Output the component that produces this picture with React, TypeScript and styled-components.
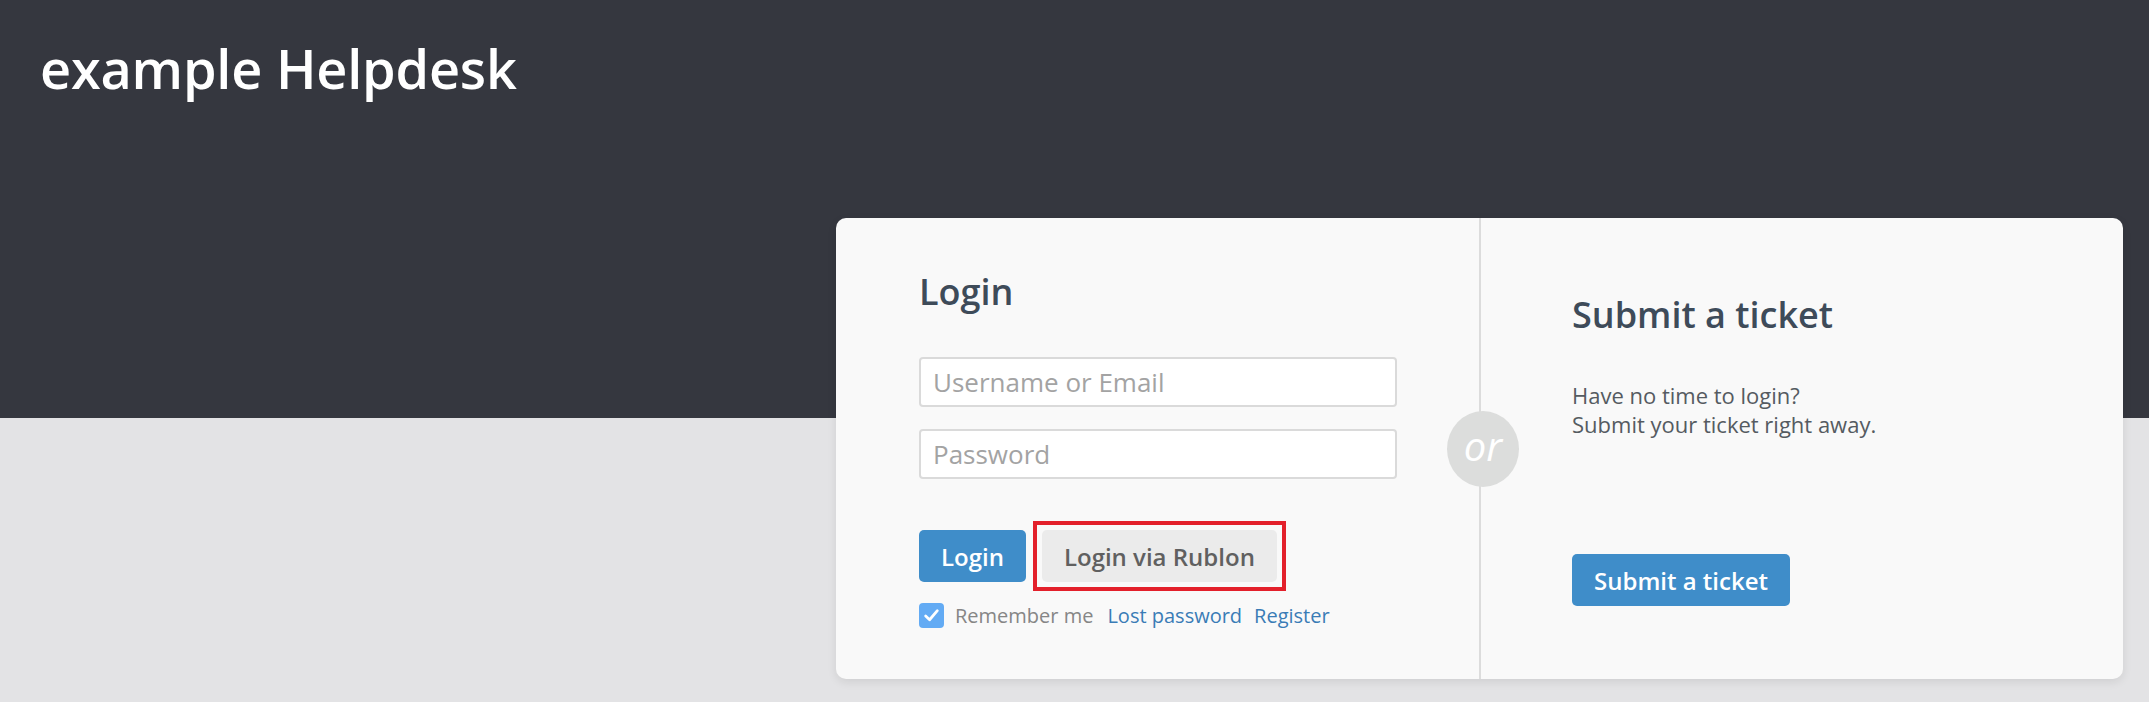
import React, { useState } from 'react';
import styled, { createGlobalStyle } from 'styled-components';

const GlobalStyle = createGlobalStyle`
  html, body {
    margin: 0;
    padding: 0;
  }
  body {
    font-family: 'Open Sans', 'Liberation Sans', Arial, sans-serif;
    background: #e3e3e5;
  }
`;

const App: React.FC = () => {
  const [remember, setRemember] = useState(true);

  return (
    <Page>
      <GlobalStyle />
      <SiteTitle>example Helpdesk</SiteTitle>

      <Card>
        <LoginPane>
          <PaneTitle>Login</PaneTitle>
          <Fields>
            <Input type="text" placeholder="Username or Email" />
            <Input type="password" placeholder="Password" />
          </Fields>
          <ButtonRow>
            <Button $variant="primary">Login</Button>
            <Highlight>
              <Button $variant="secondary">Login via Rublon</Button>
            </Highlight>
          </ButtonRow>
          <OptionsRow>
            <CheckLabel>
              <CheckBox $checked={remember} onClick={() => setRemember(!remember)}>
                {remember && (
                  <svg width="17" height="17" viewBox="0 0 16 16">
                    <path d="M2.5 8.5 L6.2 12 L13.5 3.5" fill="none" stroke="#fff" strokeWidth="2.6" strokeLinecap="round" strokeLinejoin="round" />
                  </svg>
                )}
              </CheckBox>
              Remember me
            </CheckLabel>
            <Link href="#">Lost password</Link>
            <Link href="#">Register</Link>
          </OptionsRow>
        </LoginPane>

        <OrBadge>or</OrBadge>

        <TicketPane>
          <PaneTitle>Submit a ticket</PaneTitle>
          <Blurb>
            Have no time to login?
            <br />
            Submit your ticket right away.
          </Blurb>
          <SubmitButton $variant="primary">Submit a ticket</SubmitButton>
        </TicketPane>
      </Card>
    </Page>
  );
};

const Page = styled.div`
  height: 702px;
  overflow: hidden;
  background: linear-gradient(to bottom, #35373f 0, #35373f 418px, #e3e3e5 418px);
  padding: 31px 26px 0 40px;
  box-sizing: border-box;
  display: flex;
  flex-direction: column;
`;

const SiteTitle = styled.h1`
  margin: 0;
  font-size: 54px;
  line-height: 75px;
  font-weight: 600;
  color: #ffffff;
  letter-spacing: -0.2px;
`;

const Card = styled.div`
  position: relative;
  align-self: flex-end;
  margin-top: 112px;
  width: 1287px;
  height: 461px;
  flex-shrink: 0;
  display: grid;
  grid-template-columns: 645px 1fr;
  background: #f9f9f9;
  border-radius: 10px;
  box-shadow: 0 3px 10px rgba(0, 0, 0, 0.09);
`;

const LoginPane = styled.div`
  padding: 52px 0 0 83px;
  border-right: 2px solid #dcdcdc;
  display: flex;
  flex-direction: column;
`;

const TicketPane = styled.div`
  padding: 75px 0 0 91px;
  display: flex;
  flex-direction: column;
  align-items: flex-start;
`;

const PaneTitle = styled.h2`
  margin: 0;
  font-size: 36px;
  line-height: 43px;
  font-weight: 600;
  color: #3e4b59;
`;

const Fields = styled.div`
  margin-top: 44px;
  display: flex;
  flex-direction: column;
  gap: 22px;
  width: 478px;
`;

const Input = styled.input`
  box-sizing: border-box;
  height: 50px;
  width: 100%;
  padding: 0 12px;
  border: 2px solid #dadada;
  border-radius: 4px;
  background: #ffffff;
  font-family: 'Open Sans', 'Liberation Sans', Arial, sans-serif;
  font-size: 26px;
  color: #444;
  outline: none;

  &::placeholder {
    color: #a3a3a3;
  }
`;

const ButtonRow = styled.div`
  margin-top: 51px;
  display: flex;
  align-items: center;
  gap: 16px;
`;

const Button = styled.button<{ $variant: 'primary' | 'secondary' }>`
  height: 52px;
  padding: 0 22px;
  border: none;
  border-radius: 5px;
  font-family: 'Open Sans', 'Liberation Sans', Arial, sans-serif;
  font-size: 24px;
  font-weight: 600;
  cursor: pointer;
  background: ${p => (p.$variant === 'primary' ? '#3f8dc9' : '#ebebeb')};
  color: ${p => (p.$variant === 'primary' ? '#ffffff' : '#606060')};
`;

const SubmitButton = styled(Button)`
  margin-top: 115px;
`;

const Highlight = styled.div`
  display: flex;
  outline: 4px solid #e3202b;
  outline-offset: 5px;
`;

const OptionsRow = styled.div`
  margin-top: 20px;
  display: flex;
  align-items: center;
  gap: 12px;
  font-size: 20px;
`;

const CheckLabel = styled.label`
  display: flex;
  align-items: center;
  gap: 11px;
  color: #868686;
  margin-right: 2px;
`;

const CheckBox = styled.span<{ $checked: boolean }>`
  width: 25px;
  height: 25px;
  border-radius: 4px;
  display: flex;
  align-items: center;
  justify-content: center;
  background: ${p => (p.$checked ? '#63abf4' : '#ffffff')};
  cursor: pointer;
`;

const Link = styled.a`
  color: #3a7cb6;
  text-decoration: none;
`;

const OrBadge = styled.div`
  position: absolute;
  left: 611px;
  top: 193px;
  width: 72px;
  height: 76px;
  border-radius: 50%;
  background: #dcdddc;
  display: flex;
  align-items: center;
  justify-content: center;
  color: #ffffff;
  font-size: 40px;
  font-style: italic;
  line-height: 1;
  padding-bottom: 6px;
  box-sizing: border-box;
`;

const Blurb = styled.p`
  margin: 45px 0 0;
  font-size: 22px;
  line-height: 29px;
  color: #555b61;
`;

export default App;
